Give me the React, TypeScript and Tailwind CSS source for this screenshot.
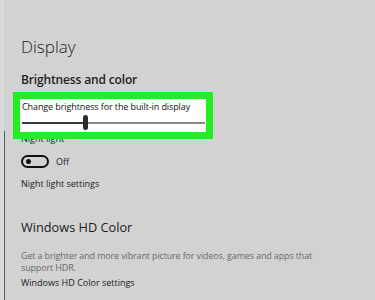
import React from "react";

export default function App() {
  return (
    <div
      className="w-[375px] h-[300px] bg-[#d2d2d2] flex overflow-hidden text-[#1b1b1b]"
      style={{ fontFamily: '"Open Sans", "Noto Sans", sans-serif' }}
    >
      <div className="w-[4px] bg-[#dadada]" />
      <div className="w-px flex flex-col">
        <div className="h-[131px]" />
        <div className="flex-1 bg-[#5a5a5a]" />
      </div>
      <div className="flex-1 pl-[16px] flex flex-col">
        <div className="mt-[37px] text-[17px] leading-[20px] font-light text-[#222]">Display</div>
        <div className="mt-[15px] text-[12px] leading-[16px] font-semibold tracking-[-0.15px] text-[#222]">
          Brightness and color
        </div>
        <div className="relative z-10 mt-[4px] -ml-[8px] w-[200px] border-[7px] border-[#22ee22] bg-[#22ee22] -mb-[6px]">
          <div className="bg-white h-[33px] flex flex-col pl-[2px] pr-[1px]">
            <div className="mt-[2px] text-[9px] leading-[12px] tracking-[-0.1px] text-[#111]">
              Change brightness for the built-in display
            </div>
            <div className="relative mt-[9px] h-[2px] flex">
              <div className="w-[62px] bg-[#3a3a3a]" />
              <div className="flex-1 bg-[#8a8a8a]" />
              <div className="absolute left-[61px] -top-[7px] w-[5px] h-[15px] rounded-full bg-[#2b2b2b]" />
            </div>
          </div>
        </div>
        <div className="text-[9px] leading-[12px]">Night light</div>
        <div className="mt-[10px] flex items-center gap-[7px]">
          <div className="w-[28px] h-[13px] rounded-full border-[2px] border-[#111] flex items-center pl-[3px]">
            <div className="w-[5px] h-[5px] rounded-full bg-[#111]" />
          </div>
          <div className="text-[9px] leading-[12px]">Off</div>
        </div>
        <div className="mt-[10px] text-[9px] leading-[12px]">Night light settings</div>
        <div className="mt-[28px] text-[12.75px] leading-[18px] text-[#1b1b1b]">Windows HD Color</div>
        <div className="mt-[14px] text-[9px] leading-[12px] tracking-[-0.15px] text-[#6a6a6a] w-[312px]">
          Get a brighter and more vibrant picture for videos, games and apps that support HDR.
        </div>
        <div className="mt-[3px] text-[9px] leading-[12px]">Windows HD Color settings</div>
      </div>
    </div>
  );
}
